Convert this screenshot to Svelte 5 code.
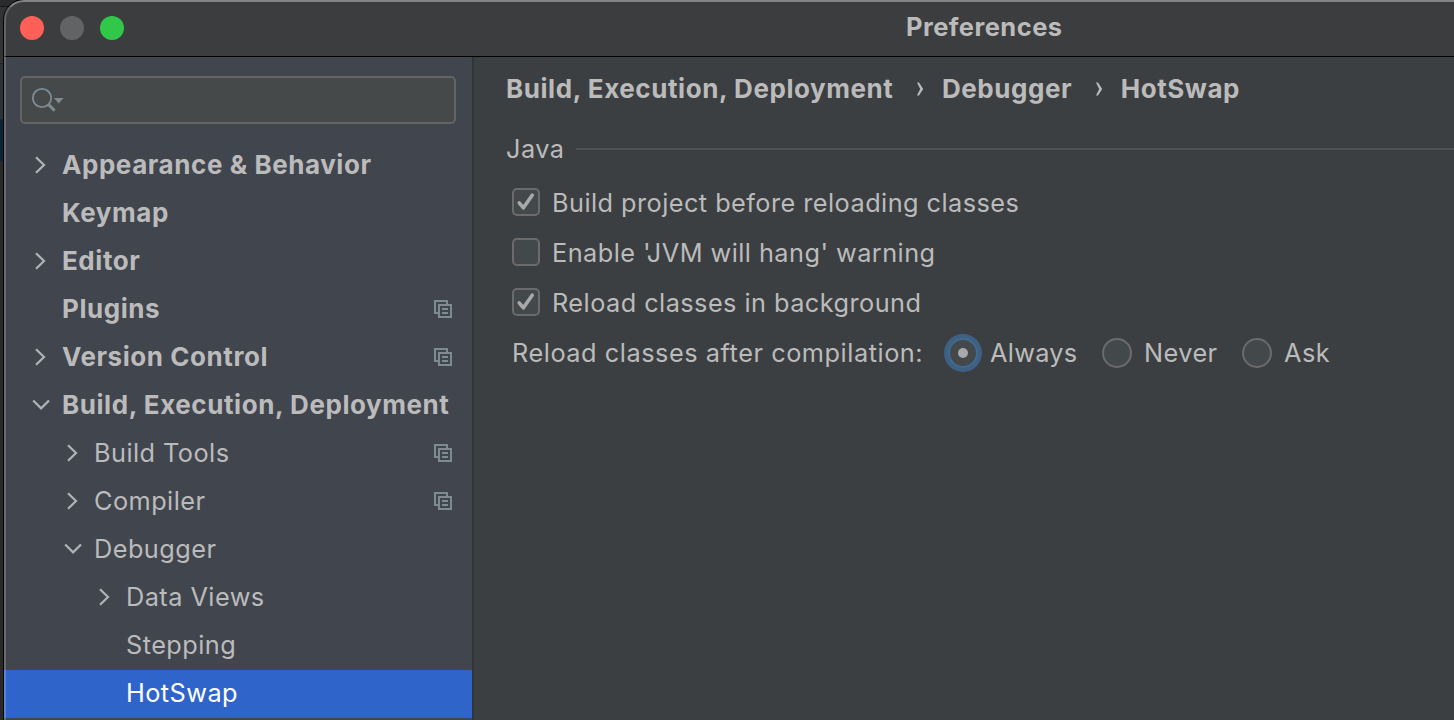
<script>
  const tree = [
    { label: 'Appearance & Behavior', level: 0, arrow: 'right' },
    { label: 'Keymap', level: 0 },
    { label: 'Editor', level: 0, arrow: 'right' },
    { label: 'Plugins', level: 0, copy: true },
    { label: 'Version Control', level: 0, arrow: 'right', copy: true },
    { label: 'Build, Execution, Deployment', level: 0, arrow: 'down' },
    { label: 'Build Tools', level: 1, arrow: 'right', copy: true },
    { label: 'Compiler', level: 1, arrow: 'right', copy: true },
    { label: 'Debugger', level: 1, arrow: 'down' },
    { label: 'Data Views', level: 2, arrow: 'right' },
    { label: 'Stepping', level: 2 },
    { label: 'HotSwap', level: 2, selected: true }
  ];
  const checks = $state([
    { label: 'Build project before reloading classes', on: true },
    { label: "Enable 'JVM will hang' warning", on: false },
    { label: 'Reload classes in background', on: true }
  ]);
  let choice = $state('Always');
</script>

<div class="desktop">
  <div class="behind"><i class="b1"></i><i class="b2"></i><i class="b3"></i><i class="b4"></i><i class="b5"></i></div>
  <div class="window">
    <header>
      <div class="lights"><span class="red"></span><span class="gray"></span><span class="green"></span></div>
      <h1>Preferences</h1>
    </header>
    <div class="body">
      <aside>
        <div class="search">
          <svg width="34" height="26" viewBox="0 0 34 26">
            <circle cx="11" cy="11" r="9.2" fill="none" stroke="#7f8b93" stroke-width="1.8" />
            <path d="M17.2 17.2L23.6 23.6" stroke="#7f8b93" stroke-width="3" />
            <path d="M23 11H32.5L27.7 16.5Z" fill="#7f8b93" />
          </svg>
        </div>
        <nav>
          {#each tree as item}
            <div class="row level{item.level}" class:selected={item.selected}>
              <span class="arrow">
                {#if item.arrow === 'right'}
                  <svg width="20" height="20" viewBox="0 0 20 20"><path d="M6 2.2L14 10L6 17.8" /></svg>
                {:else if item.arrow === 'down'}
                  <svg width="20" height="20" viewBox="0 0 20 20"><path d="M3.2 5.5L11.1 13.3L19 5.5" /></svg>
                {/if}
              </span>
              <span class="label">{item.label}</span>
              {#if item.copy}
                <svg class="copy" width="18" height="18" viewBox="0 0 18 18">
                  <path d="M4 13H1V1H13V4M5 5H17V17H5ZM8 9H14M8 13H14" />
                </svg>
              {/if}
            </div>
          {/each}
        </nav>
      </aside>
      <main>
        <div class="crumbs">
          <span>Build, Execution, Deployment</span>
          <svg width="8" height="14" viewBox="0 0 8 14"><path d="M1 .5H3L7.2 7L3 13.5H1L4.2 7Z" /></svg>
          <span>Debugger</span>
          <svg width="8" height="14" viewBox="0 0 8 14"><path d="M1 .5H3L7.2 7L3 13.5H1L4.2 7Z" /></svg>
          <span>HotSwap</span>
        </div>
        <div class="group"><span>Java</span><hr /></div>
        {#each checks as c}
          <button class="check" onclick={() => (c.on = !c.on)}>
            <span class="box">
              {#if c.on}
                <svg width="24" height="24" viewBox="0 0 24 24"><path d="M5.2 12.8L9.4 17.8L18.2 5.2" /></svg>
              {/if}
            </span>
            <span class="label">{c.label}</span>
          </button>
        {/each}
        <div class="radios">
          <span class="caption">Reload classes after compilation:</span>
          {#each ['Always', 'Never', 'Ask'] as r}
            <button class="radio {r.toLowerCase()}" onclick={() => (choice = r)}>
              <span class="dot" class:on={choice === r}></span>
              <span class="label">{r}</span>
            </button>
          {/each}
        </div>
      </main>
    </div>
  </div>
</div>

<style>
  :global(body) { background: #2b2b2b; overflow: hidden; }
  .desktop {
    position: relative;
    box-sizing: border-box;
    width: 1454px;
    height: 720px;
    padding-left: 4px;
    overflow: hidden;
    font: 430 25.3px/48px Inter, sans-serif;
    color: #bbb;
    letter-spacing: 0.45px;
    white-space: nowrap;
  }
  .behind { position: absolute; left: 0; top: 0; width: 30px; height: 720px; display: flex; flex-direction: column; }
  .b1 { height: 6px; background: #292b2d; border-bottom: 1px solid #151515; }
  .b2 { height: 56px; background: #323333; }
  .b3 { height: 55px; background: #2b3238; border-top: 1px solid #252525; }
  .b4 { height: 41px; background: #0b2439; border-top: 1px solid #252525; }
  .b5 { flex: 1; background: #292929; }
  .window {
    position: relative;
    width: 1500px;
    height: 760px;
    border-radius: 20px;
    box-shadow: 0 0 0 1px #050505;
    background: #3c3f41;
    overflow: hidden;
  }
  .window::after {
    content: '';
    position: absolute;
    inset: 0;
    border: 2px solid rgba(255, 255, 255, 0.2);
    border-top-color: rgba(255, 255, 255, 0.36);
    border-radius: 20px;
    pointer-events: none;
  }
  header {
    height: 57px;
    box-sizing: border-box;
    display: flex;
    align-items: center;
    padding: 0 0 2px 16px;
    background: #3c3d3e;
    border-bottom: 1px solid #000;
  }
  .lights { display: flex; gap: 16px; width: 886px; padding-top: 2px; }
  .lights span { width: 24px; height: 24px; border-radius: 50%; }
  .red { background: #ff5f57; }
  .gray { background: #626365; }
  .green { background: #31c748; }
  h1 { margin: 0; font-size: 25.5px; font-weight: 700; line-height: 48px; letter-spacing: 0.45px; }
  .body { display: flex; height: 703px; }
  aside {
    box-sizing: border-box;
    width: 470px;
    flex: none;
    padding-top: 19px;
    background: #41454e;
    border-right: 2px solid #323538;
  }
  .search {
    box-sizing: border-box;
    width: 436px;
    height: 48px;
    margin: 0 0 18px 16px;
    padding: 9px 0 0 9px;
    display: flex;
    border: 2px solid #646464;
    border-radius: 5px;
    background: #45494a;
  }
  .row { display: flex; align-items: center; height: 48px; padding: 0 20px 0 26px; }
  .level1 { padding-left: 58px; }
  .level2 { padding-left: 90px; }
  .level0, .crumbs { font-size: 26px; font-weight: 700; letter-spacing: 0.56px; }
  .arrow { display: flex; width: 20px; margin: 0 12px 2px 0; }
  .arrow path { fill: none; stroke: #afb1b3; stroke-width: 2.3; }
  .row .label { flex: 1; height: 50px; }
  .copy { margin-bottom: 2px; }
  .copy path { fill: none; stroke: #7f8b93; stroke-width: 2; }
  .selected { background: #2f65ca; color: #fff; }
  main { flex: 1; padding: 8px 0 0 32px; }
  .crumbs { display: flex; align-items: center; }
  .crumbs svg { margin: 0 18px 0 22.5px; fill: #bbb; }
  .group { display: flex; align-items: center; gap: 12px; height: 48px; margin-top: 12px; }
  hr { flex: 1; height: 2px; margin: 0; border: 0; background: #515151; }
  button { display: flex; align-items: center; padding: 0; border: 0; background: none; font: inherit; color: inherit; letter-spacing: inherit; }
  .check { height: 50px; margin-left: 6px; gap: 12px; }
  .group + .check { margin-top: 5px; }
  .box { box-sizing: border-box; width: 28px; height: 28px; margin-bottom: 2px; border: 2px solid #6b6b6b; border-radius: 5px; background: #43494a; }
  .box svg { display: block; }
  .box path { fill: none; stroke: #a9a9a9; stroke-width: 3.6; stroke-linecap: round; stroke-linejoin: round; }
  .radios { display: flex; align-items: center; height: 50px; margin-left: 6px; }
  .caption { width: 436px; letter-spacing: 0.54px; }
  .radio { gap: 12px; }
  .always { width: 154px; letter-spacing: 0.3px; }
  .never { width: 140px; }
  .dot { box-sizing: border-box; width: 30px; height: 30px; border: 2px solid #6b6b6b; border-radius: 50%; background: #43494a; display: grid; place-items: center; }
  .dot.on { border-color: #43698e; box-shadow: 0 0 0 4px #3d6185; }
  .dot.on::after { content: ''; width: 10px; height: 10px; border-radius: 50%; background: #a9a9a9; }
</style>
